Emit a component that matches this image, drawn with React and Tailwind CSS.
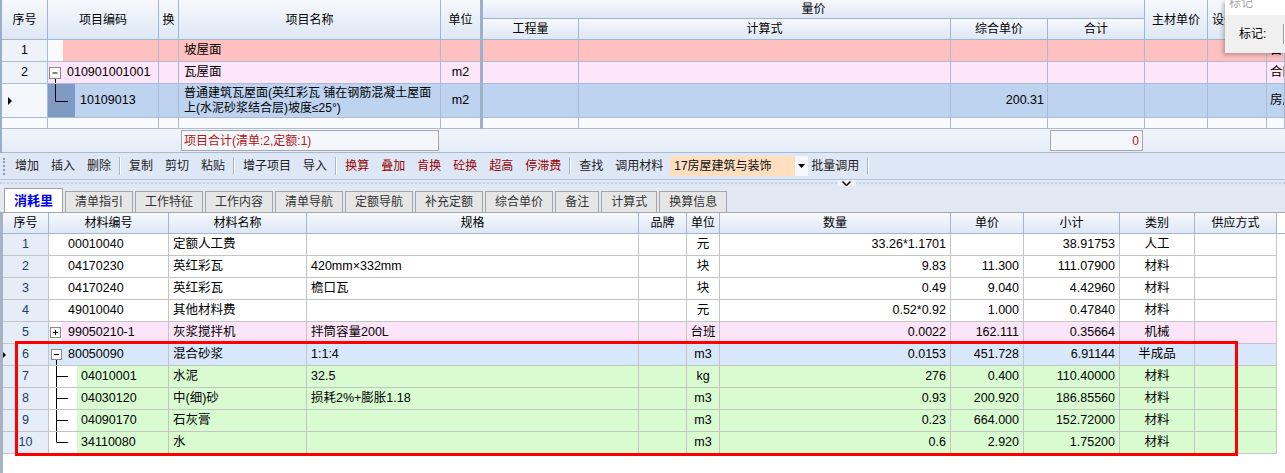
import React from "react";

const TOPCOLS = "grid grid-cols-[46px_111px_20px_262px_42px_96px_372px_97px_97px_63px_59px_1fr]";
const LOWCOLS = "grid grid-cols-[46px_120px_138px_332px_48px_33px_231px_73px_96px_75px_82px_1fr]";

const hdr = "flex items-center justify-center border-r border-b border-[#a3b6cf] bg-linear-to-b from-[#f7f9fd] to-[#dde7f5] overflow-hidden whitespace-nowrap";
const tc = "flex items-center border-r border-b border-[#aabbd2] overflow-hidden whitespace-nowrap text-[12.5px]";
const lc = "flex items-center border-r border-b border-[#c4c4c4] overflow-hidden whitespace-nowrap text-[12.5px]";

const Box = ({ sign }) => (
  <svg width="11" height="11" viewBox="0 0 11 11" className="shrink-0">
    <rect x="0.5" y="0.5" width="10" height="10" fill="#fff" stroke="#8a8a8a" />
    <path d="M3 5.5h5" stroke="#000" />
    {sign === "+" && <path d="M5.5 3v5" stroke="#000" />}
  </svg>
);

const Arrow = () => (
  <svg width="5" height="8" viewBox="0 0 5 8" className="shrink-0">
    <path d="M0 0L4 4L0 8Z" fill="#000" />
  </svg>
);

const lowRows = [
  { code: "00010040", name: "定额人工费", spec: "", unit: "元", qty: "33.26*1.1701", price: "", sub: "38.91753", type: "人工" },
  { code: "04170230", name: "英红彩瓦", spec: "420mm×332mm", unit: "块", qty: "9.83", price: "11.300", sub: "111.07900", type: "材料" },
  { code: "04170240", name: "英红彩瓦", spec: "檐口瓦", unit: "块", qty: "0.49", price: "9.040", sub: "4.42960", type: "材料" },
  { code: "49010040", name: "其他材料费", spec: "", unit: "元", qty: "0.52*0.92", price: "1.000", sub: "0.47840", type: "材料" },
  { code: "99050210-1", name: "灰浆搅拌机", spec: "拌筒容量200L", unit: "台班", qty: "0.0022", price: "162.111", sub: "0.35664", type: "机械", kind: "plus" },
  { code: "80050090", name: "混合砂浆", spec: "1:1:4", unit: "m3", qty: "0.0153", price: "451.728", sub: "6.91144", type: "半成品", kind: "minus" },
  { code: "04010001", name: "水泥", spec: "32.5", unit: "kg", qty: "276", price: "0.400", sub: "110.40000", type: "材料", kind: "child" },
  { code: "04030120", name: "中(细)砂", spec: "损耗2%+膨胀1.18", unit: "m3", qty: "0.93", price: "200.920", sub: "186.85560", type: "材料", kind: "child" },
  { code: "04090170", name: "石灰膏", spec: "", unit: "m3", qty: "0.23", price: "664.000", sub: "152.72000", type: "材料", kind: "child" },
  { code: "34110080", name: "水", spec: "", unit: "m3", qty: "0.6", price: "2.920", sub: "1.75200", type: "材料", kind: "last" },
];

const rowBg = (k) =>
  k === "plus" ? "bg-[#fce4f9]" : k === "minus" ? "bg-[#d8e8fa]" : k === "child" || k === "last" ? "bg-[#d8fcd0]" : "bg-white";

function CodeCell({ r }) {
  if (r.kind === "plus")
    return (
      <div className={`${lc} bg-white`}>
        <div className="w-[13px] h-full flex items-center pl-[1px]"><Box sign="+" /></div>
        <div className="flex-1 h-full flex items-center pl-[6px] bg-[#fce4f9]">{r.code}</div>
      </div>
    );
  if (r.kind === "minus")
    return (
      <div className={`${lc} bg-[#d8e8fa]`}>
        <svg width="17" height="21" viewBox="0 0 17 21" className="shrink-0">
          <rect x="2.5" y="5.5" width="10" height="10" fill="#fff" stroke="#8a8a8a" />
          <path d="M5 10.5h5" stroke="#000" />
          <path d="M7.5 16V21" stroke="#000" />
        </svg>
        <span className="pl-[2px]">{r.code}</span>
      </div>
    );
  if (r.kind === "child" || r.kind === "last")
    return (
      <div className={`${lc} bg-white`}>
        <svg width="28" height="21" viewBox="0 0 28 21" className="shrink-0">
          <path d={r.kind === "last" ? "M7.5 0V10.5H19" : "M7.5 0V21M7.5 10.5H19"} stroke="#000" fill="none" />
        </svg>
        <div className="flex-1 h-full flex items-center pl-[4px] bg-[#d8fcd0]">{r.code}</div>
      </div>
    );
  return <div className={`${lc} ${rowBg(r.kind)} pl-[19px]`}>{r.code}</div>;
}

const Btn = ({ children, red }) => (
  <span className={`px-[6px] ${red ? "text-[#990000]" : "text-[#222]"}`}>{children}</span>
);
const Sep = () => <span className="mx-[2px] h-[18px] w-[2px] border-l border-[#a9b7ca] border-r border-r-white" />;

const tabs = ["清单指引", "工作特征", "工作内容", "清单导航", "定额导航", "补充定额", "综合单价", "备注", "计算式", "换算信息"];

export default function App() {
  return (
    <div className="relative w-[1285px] h-[473px] overflow-hidden bg-white text-[12px] text-black font-[family-name:'Liberation_Sans','Noto_Sans_CJK_SC',sans-serif]">
      {/* upper grid */}
      <div className="border-l-2 border-[#9aaec8]">
        <div className={`${TOPCOLS} grid-rows-[19px_21px]`}>
          <div className={`${hdr} row-span-2`}>序号</div>
          <div className={`${hdr} row-span-2`}>项目编码</div>
          <div className={`${hdr} row-span-2`}>换</div>
          <div className={`${hdr} row-span-2`}>项目名称</div>
          <div className={`${hdr} row-span-2 border-r-[3px] border-r-[#9cb0ca]`}>单位</div>
          <div className={`${hdr} col-span-4`}>量价</div>
          <div className={`${hdr} row-span-2`}>主材单价</div>
          <div className={`${hdr} row-span-2 justify-start pl-[4px]`}>设备单价</div>
          <div className={`${hdr} row-span-2`}></div>
          <div className={hdr}>工程量</div>
          <div className={hdr}>计算式</div>
          <div className={hdr}>综合单价</div>
          <div className={hdr}>合计</div>
        </div>

        {/* row 1 */}
        <div className={`${TOPCOLS} h-[22px]`}>
          <div className={`${tc} justify-center bg-[#eef3fa]`}>1</div>
          <div className={`${tc} bg-[#ffc0c0]`}><div className="w-[15px] h-full bg-[#f8fafc]" /></div>
          <div className={`${tc} bg-[#ffc0c0]`} />
          <div className={`${tc} bg-[#ffc0c0] pl-[5px]`}>坡屋面</div>
          <div className={`${tc} bg-[#ffc0c0] border-r-[3px] border-r-[#9cb0ca]`} />
          <div className={`${tc} bg-[#ffc0c0]`} />
          <div className={`${tc} bg-[#ffc0c0]`} />
          <div className={`${tc} bg-[#ffc0c0]`} />
          <div className={`${tc} bg-[#ffc0c0]`} />
          <div className={`${tc} bg-[#ffc0c0]`} />
          <div className={`${tc} bg-[#ffc0c0]`} />
          <div className={`${tc} bg-[#ffc0c0] pl-[3px]`}>目</div>
        </div>

        {/* row 2 */}
        <div className={`${TOPCOLS} h-[22px]`}>
          <div className={`${tc} justify-center bg-[#eef3fa]`}>2</div>
          <div className={`${tc} bg-[#fee6fa]`}>
            <svg width="17" height="21" viewBox="0 0 17 21" className="shrink-0">
              <rect x="1.5" y="5.5" width="11" height="11" fill="#fff" stroke="#8a8a8a" />
              <path d="M4.5 11h5" stroke="#000" />
              <path d="M7.5 17V21" stroke="#000" />
            </svg>
            <span className="pl-[2px]">010901001001</span>
          </div>
          <div className={`${tc} bg-[#fee6fa]`} />
          <div className={`${tc} bg-[#fee6fa] pl-[5px]`}>瓦屋面</div>
          <div className={`${tc} bg-[#fee6fa] justify-center border-r-[3px] border-r-[#9cb0ca]`}>m2</div>
          <div className={`${tc} bg-[#fee6fa]`} />
          <div className={`${tc} bg-[#fee6fa]`} />
          <div className={`${tc} bg-[#fee6fa]`} />
          <div className={`${tc} bg-[#fee6fa]`} />
          <div className={`${tc} bg-[#fee6fa]`} />
          <div className={`${tc} bg-[#fee6fa]`} />
          <div className={`${tc} bg-[#fee6fa] pl-[3px]`}>合同</div>
        </div>

        {/* row 3 */}
        <div className={`${TOPCOLS} h-[34px]`}>
          <div className={`${tc} bg-[#f4f7fb] pl-[6px]`}><Arrow /></div>
          <div className={`${tc} bg-[#bdd3f0]`}>
            <div className="w-[27px] h-full bg-[#7f9bc4]">
              <svg width="27" height="33" viewBox="0 0 27 33">
                <path d="M7.5 0V17.5H20" stroke="#000" fill="none" />
              </svg>
            </div>
            <span className="pl-[5px]">10109013</span>
          </div>
          <div className={`${tc} bg-[#bdd3f0]`} />
          <div className={`${tc} bg-[#bdd3f0] pl-[5px] leading-[15px] text-[12px]`}>
            <div>普通建筑瓦屋面(英红彩瓦 铺在钢筋混凝土屋面<br />上(水泥砂浆结合层)坡度≤25°)</div>
          </div>
          <div className={`${tc} bg-[#bdd3f0] justify-center border-r-[3px] border-r-[#9cb0ca]`}>m2</div>
          <div className={`${tc} bg-[#bdd3f0]`} />
          <div className={`${tc} bg-[#bdd3f0]`} />
          <div className={`${tc} bg-[#bdd3f0] justify-end pr-[3px]`}>200.31</div>
          <div className={`${tc} bg-[#bdd3f0]`} />
          <div className={`${tc} bg-[#bdd3f0]`} />
          <div className={`${tc} bg-[#bdd3f0]`} />
          <div className={`${tc} bg-[#bdd3f0] pl-[3px]`}>房屋</div>
        </div>

        {/* row 4 empty */}
        <div className={`${TOPCOLS} h-[11px]`}>
          {Array.from({ length: 12 }).map((_, i) => (
            <div key={i} className={`${tc} bg-[#f8fafc] ${i === 4 ? "border-r-[3px] border-r-[#9cb0ca]" : ""}`} />
          ))}
        </div>

        {/* footer */}
        <div className={`${TOPCOLS} h-[24px] items-center bg-linear-to-b from-[#f1f5fb] to-[#e4ecf7] border-b border-[#a9bacf]`}>
          <div /><div /><div />
          <div className="mx-[2px] h-[21px] border border-[#a8a8a8] bg-[#f3f6fa] flex items-center pl-[2px] text-[#b01818] whitespace-nowrap">
            项目合计(清单:2,定额:1)
          </div>
          <div /><div /><div /><div />
          <div className="mx-[2px] h-[21px] border border-[#a8a8a8] bg-[#f3f6fa] flex items-center justify-end pr-[3px] text-[#b01818]">0</div>
          <div /><div /><div />
        </div>
      </div>

      {/* toolbar */}
      <div className="h-[26px] bg-[#dee7f5] flex items-center pl-[3px]">
        <span className="h-[17px] w-[3px] border-l-2 border-dotted border-[#8d9bb0] mr-[3px]" />
        <Btn>增加</Btn><Btn>插入</Btn><Btn>删除</Btn>
        <Sep />
        <Btn>复制</Btn><Btn>剪切</Btn><Btn>粘贴</Btn>
        <Sep />
        <Btn>增子项目</Btn><Btn>导入</Btn>
        <Sep />
        <Btn red>换算</Btn><Btn red>叠加</Btn><Btn red>肯换</Btn><Btn red>砼换</Btn><Btn red>超高</Btn><Btn red>停滞费</Btn>
        <Sep />
        <Btn>查找</Btn><Btn>调用材料</Btn>
        <div className="ml-[1px] flex h-[20px] items-stretch">
          <div className="w-[125px] bg-[#ffdfc0] flex items-center pl-[4px] text-[#111]">17房屋建筑与装饰</div>
          <div className="w-[13px] bg-[#f6f8fb] flex items-center justify-center">
            <svg width="7" height="4" viewBox="0 0 7 4"><path d="M0 0H7L3.5 4Z" fill="#000" /></svg>
          </div>
        </div>
        <span className="pl-[3px] pr-[6px] text-[#222]">批量调用</span>
        <Sep />
      </div>

      {/* splitter */}
      <div className="relative h-[7px] bg-[#dee7f5] border-t border-[#b7c3d3]">
        <div className="mt-[2px] border-t-2 border-dotted border-[#c6ceda]" />
        <div className="absolute left-[837px] top-0 w-[19px] h-[6px] bg-[#eef2f8] flex items-center justify-center">
          <svg width="9" height="5" viewBox="0 0 9 5"><path d="M0.5 0.5L4.5 4.5L8.5 0.5" stroke="#000" strokeWidth="1.5" fill="none" /></svg>
        </div>
      </div>

      {/* tabs */}
      <div className="h-[27px] bg-[#e2e9f4] flex items-end pl-[4px] gap-[1px] border-b border-[#a7a7a7]">
        <div className="h-[24px] px-[9px] bg-white border border-b-0 border-[#9f9f9f] flex items-center text-[13px] font-bold text-[#0000f0]">消耗里</div>
        {tabs.map((t) => (
          <div key={t} className="h-[21px] px-[9px] bg-[#e6e6e6] border border-b-0 border-[#a5a5a5] flex items-center text-[#333] ml-px">{t}</div>
        ))}
      </div>

      {/* lower table */}
      <div className="border-l-[3px] border-[#a7b3c4] h-[260px]">
        <div className={`${LOWCOLS} h-[21px]`}>
          <div className={hdr}>序号</div>
          <div className={hdr}>材料编号</div>
          <div className={hdr}>材料名称</div>
          <div className={hdr}>规格</div>
          <div className={hdr}>品牌</div>
          <div className={hdr}>单位</div>
          <div className={hdr}>数量</div>
          <div className={hdr}>单价</div>
          <div className={hdr}>小计</div>
          <div className={hdr}>类别</div>
          <div className={hdr}>供应方式</div>
          <div className="bg-white border-b border-[#a3b6cf]" />
        </div>
        {lowRows.map((r, i) => {
          const bg = rowBg(r.kind);
          return (
            <div key={i} className={`${LOWCOLS} h-[22px]`}>
              <div className={`${lc} relative justify-center bg-[#e5edf8] text-[#213d6b]`}>
                {r.kind === "minus" && <span className="absolute left-[-1px] top-[7px]"><Arrow /></span>}
                {i + 1}
              </div>
              <CodeCell r={r} />
              <div className={`${lc} ${bg} pl-[4px]`}>{r.name}</div>
              <div className={`${lc} ${bg} pl-[4px]`}>{r.spec}</div>
              <div className={`${lc} ${bg}`} />
              <div className={`${lc} ${bg} justify-center`}>{r.unit}</div>
              <div className={`${lc} ${bg} justify-end pr-[4px]`}>{r.qty}</div>
              <div className={`${lc} ${bg} justify-end pr-[4px]`}>{r.price}</div>
              <div className={`${lc} ${bg} justify-end pr-[4px]`}>{r.sub}</div>
              <div className={`${lc} ${bg} justify-center`}>{r.type}</div>
              <div className={`${lc} ${bg}`} />
              <div className="bg-white" />
            </div>
          );
        })}
      </div>

      {/* red highlight frame */}
      <div className="absolute left-[15px] top-[341px] w-[1223px] h-[115px] border-[3px] border-[#ff0000]" />

      {/* floating mark panel */}
      <div className="absolute left-[1225px] top-0 w-[60px] h-[53px] bg-[#f0f0f0] shadow-[-2px_2px_4px_rgba(0,0,0,0.25)] overflow-hidden">
        <div className="h-[15px] bg-white overflow-hidden">
          <div className="-mt-[6px] pl-[4px] text-[#a8a8a8]">标记</div>
        </div>
        <div className="flex items-center h-[38px] pl-[14px]">
          <span>标记:</span>
          <div className="ml-auto h-[20px] w-[2px] bg-white border-l border-[#999]" />
        </div>
      </div>
    </div>
  );
}
